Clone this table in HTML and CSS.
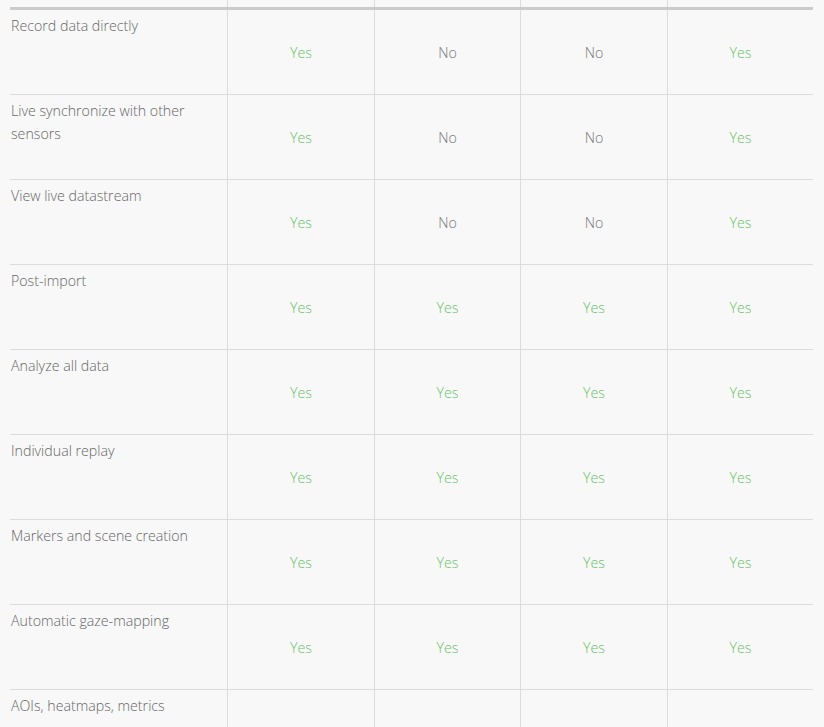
FILE: index.html
```html
<!DOCTYPE html>
<html>
<head>
<meta charset="utf-8">
<link rel="stylesheet" href="styles.css">
</head>
<body>
<div class="table">
  <div class="row stub"><div class="cell label"></div><div class="cell"></div><div class="cell"></div><div class="cell"></div><div class="cell"></div></div>
  <div class="rule"></div>
  <div class="row"><div class="cell label">Record data directly</div><div class="cell yes">Yes</div><div class="cell no">No</div><div class="cell no">No</div><div class="cell yes">Yes</div></div>
  <div class="row"><div class="cell label">Live synchronize with other sensors</div><div class="cell yes">Yes</div><div class="cell no">No</div><div class="cell no">No</div><div class="cell yes">Yes</div></div>
  <div class="row"><div class="cell label">View live datastream</div><div class="cell yes">Yes</div><div class="cell no">No</div><div class="cell no">No</div><div class="cell yes">Yes</div></div>
  <div class="row"><div class="cell label">Post-import</div><div class="cell yes">Yes</div><div class="cell yes">Yes</div><div class="cell yes">Yes</div><div class="cell yes">Yes</div></div>
  <div class="row"><div class="cell label">Analyze all data</div><div class="cell yes">Yes</div><div class="cell yes">Yes</div><div class="cell yes">Yes</div><div class="cell yes">Yes</div></div>
  <div class="row"><div class="cell label">Individual replay</div><div class="cell yes">Yes</div><div class="cell yes">Yes</div><div class="cell yes">Yes</div><div class="cell yes">Yes</div></div>
  <div class="row"><div class="cell label">Markers and scene creation</div><div class="cell yes">Yes</div><div class="cell yes">Yes</div><div class="cell yes">Yes</div><div class="cell yes">Yes</div></div>
  <div class="row"><div class="cell label">Automatic gaze-mapping</div><div class="cell yes">Yes</div><div class="cell yes">Yes</div><div class="cell yes">Yes</div><div class="cell yes">Yes</div></div>
  <div class="row"><div class="cell label">AOIs, heatmaps, metrics</div><div class="cell"></div><div class="cell"></div><div class="cell"></div><div class="cell"></div></div>
</div>
</body>
</html>
```
FILE: styles.css
```css
html, body {
  margin: 0;
  padding: 0;
  background: #f8f8f8;
}
body {
  font-family: "Open Sans", "Liberation Sans", sans-serif;
  font-weight: 300;
  font-size: 14.2px;
  line-height: 23px;
  color: #666;
}
.table {
  margin-left: 10px;
  width: 803px;
}
.row {
  display: grid;
  grid-template-columns: 217px 147px 146px 147px 146px;
  height: 84px;
  border-bottom: 1px solid #dcdcdc;
}
.row.stub {
  height: 7px;
  border-bottom: none;
}
.rule {
  height: 3px;
  background: #cbcbcb;
}
.cell {
  border-left: 1px solid #dcdcdc;
  display: flex;
  align-items: center;
  justify-content: center;
}
.cell.label {
  border-left: none;
  display: block;
  padding: 4px 8px 0 1px;
  color: #666;
}
.yes {
  color: #66c466;
}
.no {
  color: #777;
}
```
